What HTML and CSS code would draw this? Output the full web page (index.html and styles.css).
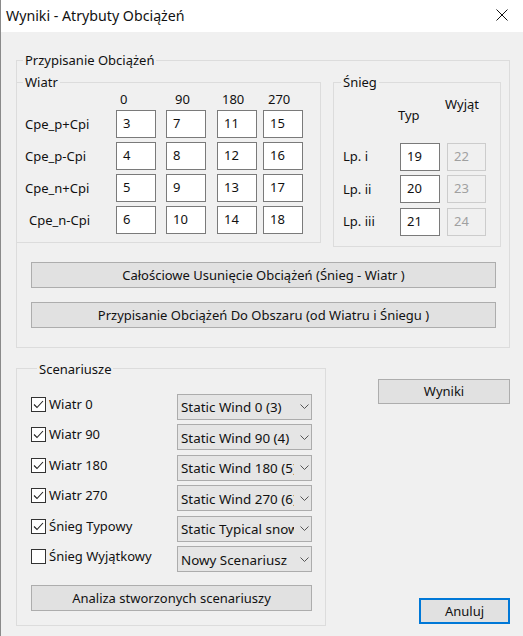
FILE: index.html
```html
<!DOCTYPE html>
<html lang="pl">
<head>
<meta charset="utf-8">
<title>Wyniki - Atrybuty Obciążeń</title>
<link rel="stylesheet" href="styles.css">
</head>
<body>
<div class="window">
  <div class="titlebar">
    <span class="title">Wyniki - Atrybuty Obciążeń</span>
    <svg class="close" width="12" height="12" viewBox="0 0 12 12"><path d="M0.5 0.5L11.5 11.5M11.5 0.5L0.5 11.5" stroke="#111" stroke-width="1" fill="none"/></svg>
  </div>
  <div class="client">
    <fieldset class="group outer">
      <legend>Przypisanie Obciążeń</legend>
      <div class="top-row">
        <fieldset class="group wind">
          <legend>Wiatr</legend>
          <div class="wind-grid">
            <span></span>
            <span class="hd p4">0</span>
            <span class="hd p9">90</span>
            <span class="hd p5">180</span>
            <span class="hd p5">270</span>

            <span class="rl">Cpe_p+Cpi</span>
            <span class="tb">3</span><span class="tb">7</span><span class="tb">11</span><span class="tb">15</span>

            <span class="rl">Cpe_p-Cpi</span>
            <span class="tb">4</span><span class="tb">8</span><span class="tb">12</span><span class="tb">16</span>

            <span class="rl">Cpe_n+Cpi</span>
            <span class="tb">5</span><span class="tb">9</span><span class="tb">13</span><span class="tb">17</span>

            <span class="rl rl-shift">Cpe_n-Cpi</span>
            <span class="tb">6</span><span class="tb">10</span><span class="tb">14</span><span class="tb">18</span>
          </div>
        </fieldset>
        <fieldset class="group snow">
          <legend>Śnieg</legend>
          <div class="snow-grid">
            <span></span>
            <span class="hd typ">Typ</span>
            <span class="hd wyj">Wyjąt</span>

            <span class="rl">Lp. i</span>
            <span class="tb">19</span><span class="tb disabled">22</span>

            <span class="rl">Lp. ii</span>
            <span class="tb">20</span><span class="tb disabled">23</span>

            <span class="rl">Lp. iii</span>
            <span class="tb">21</span><span class="tb disabled">24</span>
          </div>
        </fieldset>
      </div>
      <button class="btn wide first">Całościowe Usunięcie Obciążeń (Śnieg - Wiatr )</button>
      <button class="btn wide second">Przypisanie Obciążeń Do Obszaru (od Wiatru i Śniegu )</button>
    </fieldset>

    <div class="bottom-row">
      <fieldset class="group scen">
        <legend>Scenariusze</legend>
        <div class="scen-grid">
          <label class="chk"><span class="box checked"><svg width="13" height="13" viewBox="0 0 13 13"><path d="M2 6.5L5 9.5L11 3" stroke="#222" stroke-width="1.1" fill="none"/></svg></span>Wiatr 0</label>
          <div class="combo"><span class="ctext">Static Wind 0 (3)</span><svg class="chev" width="9" height="5" viewBox="0 0 9 5"><path d="M0.5 0.5L4.5 4.5L8.5 0.5" stroke="#555" stroke-width="1" fill="none"/></svg></div>

          <label class="chk"><span class="box checked"><svg width="13" height="13" viewBox="0 0 13 13"><path d="M2 6.5L5 9.5L11 3" stroke="#222" stroke-width="1.1" fill="none"/></svg></span>Wiatr 90</label>
          <div class="combo"><span class="ctext">Static Wind 90 (4)</span><svg class="chev" width="9" height="5" viewBox="0 0 9 5"><path d="M0.5 0.5L4.5 4.5L8.5 0.5" stroke="#555" stroke-width="1" fill="none"/></svg></div>

          <label class="chk"><span class="box checked"><svg width="13" height="13" viewBox="0 0 13 13"><path d="M2 6.5L5 9.5L11 3" stroke="#222" stroke-width="1.1" fill="none"/></svg></span>Wiatr 180</label>
          <div class="combo"><span class="ctext">Static Wind 180 (5)</span><svg class="chev" width="9" height="5" viewBox="0 0 9 5"><path d="M0.5 0.5L4.5 4.5L8.5 0.5" stroke="#555" stroke-width="1" fill="none"/></svg></div>

          <label class="chk"><span class="box checked"><svg width="13" height="13" viewBox="0 0 13 13"><path d="M2 6.5L5 9.5L11 3" stroke="#222" stroke-width="1.1" fill="none"/></svg></span>Wiatr 270</label>
          <div class="combo"><span class="ctext">Static Wind 270 (6)</span><svg class="chev" width="9" height="5" viewBox="0 0 9 5"><path d="M0.5 0.5L4.5 4.5L8.5 0.5" stroke="#555" stroke-width="1" fill="none"/></svg></div>

          <label class="chk"><span class="box checked"><svg width="13" height="13" viewBox="0 0 13 13"><path d="M2 6.5L5 9.5L11 3" stroke="#222" stroke-width="1.1" fill="none"/></svg></span>Śnieg Typowy</label>
          <div class="combo"><span class="ctext">Static Typical snow</span><svg class="chev" width="9" height="5" viewBox="0 0 9 5"><path d="M0.5 0.5L4.5 4.5L8.5 0.5" stroke="#555" stroke-width="1" fill="none"/></svg></div>

          <label class="chk"><span class="box"></span>Śnieg Wyjątkowy</label>
          <div class="combo"><span class="ctext">Nowy Scenariusz</span><svg class="chev" width="9" height="5" viewBox="0 0 9 5"><path d="M0.5 0.5L4.5 4.5L8.5 0.5" stroke="#555" stroke-width="1" fill="none"/></svg></div>
        </div>
        <button class="btn analiza">Analiza stworzonych scenariuszy</button>
      </fieldset>
      <div class="side">
        <button class="btn wyniki">Wyniki</button>
        <button class="btn anuluj">Anuluj</button>
      </div>
    </div>
  </div>
</div>
</body>
</html>
```
FILE: styles.css
```css
* { box-sizing: border-box; }
html, body { margin: 0; padding: 0; }
body {
  width: 523px;
  height: 636px;
  overflow: hidden;
  background: #f0f0f0;
  font-family: "Noto Sans", "Open Sans", sans-serif;
  font-size: 13px;
  color: #111;
}
.window {
  height: 636px;
  border-left: 1px solid #8a8a8a;
  background: #f0f0f0;
}
.titlebar {
  height: 32px;
  background: #fff;
  display: flex;
  align-items: center;
  justify-content: space-between;
  padding: 0 15px 0 5px;
}
.title {
  font-size: 14.2px;
  line-height: 18px;
  color: #111;
}
.close { display: block; margin-top: -2px; }

.client {
  padding: 20px 13px 0 15px;
}

.group {
  border: 1px solid #dcdcdc;
  margin: 0;
  padding: 0;
  min-width: 0;
}
.group > legend {
  font-size: 13px;
  line-height: 16px;
  padding: 0 2px;
  margin-left: 6px;
}

.outer {
  width: 494px;
  padding-bottom: 19px;
}
.top-row {
  display: flex;
  align-items: flex-start;
  margin-top: 6px;
}
.wind {
  width: 305px;
  margin-left: -1px;
  padding-bottom: 8px;
}
.wind-grid {
  display: grid;
  grid-template-columns: 99px 50px 51px 46px 40px;
  grid-template-rows: 16px repeat(4, 28px);
  row-gap: 4px;
}
.hd { line-height: 16px; margin-top: 1px; }
.p4 { padding-left: 4px; }
.p5 { padding-left: 5px; }
.p9 { padding-left: 9px; }
.rl {
  align-self: center;
  padding-left: 8px;
  margin-top: -1px;
  white-space: nowrap;
}
.rl-shift { padding-left: 12px; }

.tb {
  width: 40px;
  height: 28px;
  background: #fff;
  border: 1px solid #7a7a7a;
  padding: 4px 0 0 6px;
  line-height: 16px;
}
.tb.disabled {
  width: 39px;
  background: #f0f0f0;
  border-color: #cccccc;
  color: #a0a0a0;
}

.snow {
  width: 168px;
  margin-left: 12px;
  padding-bottom: 10px;
}
.snow > legend { margin-left: 7px; }
.snow-grid {
  display: grid;
  grid-template-columns: 66px 47px 40px;
  grid-template-rows: 48px repeat(3, 28px);
  row-gap: 4.5px;
}
.snow-grid .rl { padding-left: 9px; }
.typ { padding-top: 16px; margin-left: -2px; }
.wyj { padding-top: 5px; margin-left: -2px; }

.btn {
  display: block;
  font-family: inherit;
  font-size: 13px;
  line-height: 16px;
  color: #111;
  background: #e1e1e1;
  border: 1px solid #adadad;
  border-radius: 0;
  padding: 0;
  margin: 0;
  text-align: center;
  white-space: nowrap;
}
.wide {
  width: 465px;
  height: 26px;
  margin-left: 14px;
}
.first { margin-top: 15px; }
.second { margin-top: 14px; }

.bottom-row {
  display: flex;
  align-items: stretch;
  margin-top: 13px;
}
.scen {
  width: 310px;
  padding: 0 0 14px 14px;
}
.scen-grid {
  display: grid;
  grid-template-columns: 146px 135px;
  grid-template-rows: repeat(6, 26px);
  row-gap: 4.6px;
  margin-top: 17px;
}
.chk {
  display: flex;
  align-items: flex-start;
  gap: 3px;
  line-height: 16px;
  padding-top: 2px;
  white-space: nowrap;
}
.box {
  width: 15px;
  height: 15px;
  margin-top: 1px;
  border: 1px solid #333;
  background: #fff;
  display: flex;
  align-items: center;
  justify-content: center;
  flex: none;
}
.box svg { display: block; }
.combo {
  display: flex;
  align-items: center;
  height: 26px;
  background: #e5e5e5;
  border: 1px solid #acacac;
  padding: 0 0 0 3px;
}
.ctext {
  width: 113px;
  overflow: hidden;
  white-space: nowrap;
  font-size: 13.4px;
  line-height: 16px;
  margin-top: 1px;
}
.chev { margin-left: 6px; display: block; }

.analiza {
  width: 281px;
  height: 26px;
  margin-top: 13px;
}

.side {
  flex: 1;
  display: flex;
  flex-direction: column;
  align-items: flex-end;
  justify-content: space-between;
  padding: 18px 0 2px 0;
}
.wyniki {
  width: 132px;
  height: 25px;
}
.anuluj {
  width: 91px;
  height: 26px;
  border: 2px solid #0078d7;
}
```
